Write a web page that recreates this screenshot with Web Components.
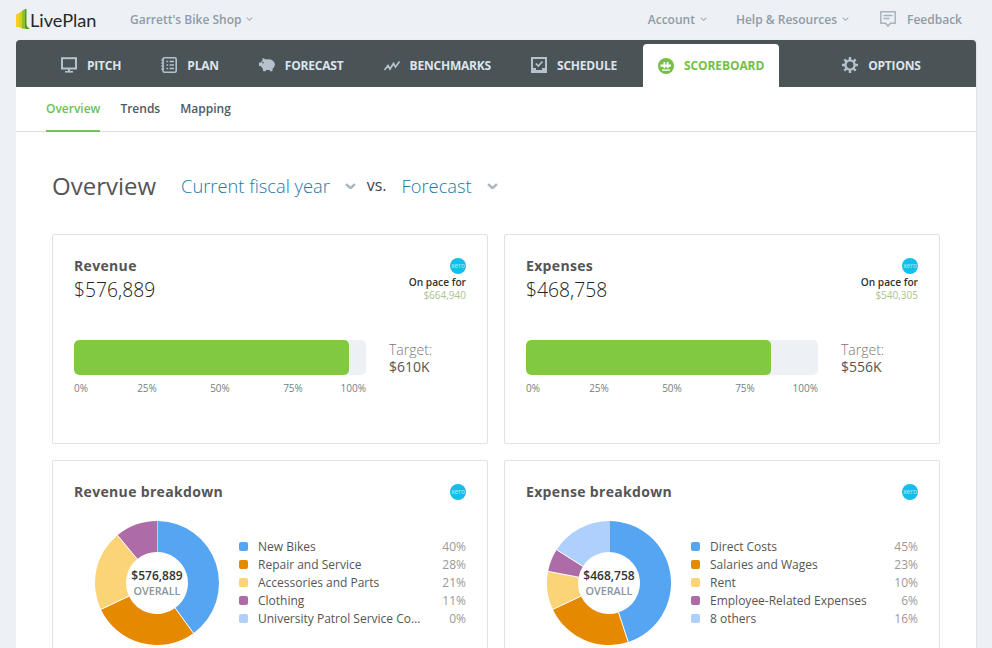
<!DOCTYPE html>
<html lang="en"><head><meta charset="utf-8"><title>LivePlan</title>
<style>
html,body{margin:0;padding:0;height:648px;overflow:hidden;background:#edf0f5;font-family:"Open Sans","Liberation Sans",sans-serif;}
</style></head><body>
<lp-app>
  <lp-topbar slot="top"></lp-topbar>
  <lp-nav slot="nav">
    <lp-nav-item icon="pitch" style="margin-left:45px">PITCH</lp-nav-item>
    <lp-nav-item icon="plan" style="margin-left:40px">PLAN</lp-nav-item>
    <lp-nav-item icon="forecast" style="margin-left:40px">FORECAST</lp-nav-item>
    <lp-nav-item icon="benchmarks" style="margin-left:40px">BENCHMARKS</lp-nav-item>
    <lp-nav-item icon="schedule" style="margin-left:40px">SCHEDULE</lp-nav-item>
    <lp-nav-item icon="scoreboard" active style="margin-left:26px">SCOREBOARD</lp-nav-item>
    <lp-nav-item icon="options" style="margin-left:63px">OPTIONS</lp-nav-item>
  </lp-nav>
  <lp-subnav slot="sub"></lp-subnav>
  <lp-overview-head slot="main"></lp-overview-head>
  <lp-grid slot="main">
    <lp-metric-card title="Revenue" amount="$576,889" pace="$664,940" pct="94.2" target="$610K"></lp-metric-card>
    <lp-metric-card title="Expenses" amount="$468,758" pace="$540,305" pct="83.9" target="$556K"></lp-metric-card>
    <lp-breakdown-card title="Revenue breakdown" amount="$576,889" data='[["New Bikes",40],["Repair and Service",28],["Accessories and Parts",21],["Clothing",11],["University Patrol Service Company",0]]'></lp-breakdown-card>
    <lp-breakdown-card title="Expense breakdown" amount="$468,758" data='[["Direct Costs",45],["Salaries and Wages",23],["Rent",10],["Employee-Related Expenses",6],["8 others",16]]'></lp-breakdown-card>
  </lp-grid>
</lp-app>
<script>
const chevron=(c,w=8,sw=1.3)=>`<svg width="${w}" height="${w*.6}" viewBox="0 0 8 4.8" fill="none" stroke="${c}" stroke-width="${sw}"><path d="M.8.8 4 3.8 7.2.8"/></svg>`;
const ICONS={
 pitch:`<rect x="1" y="1.2" width="14" height="10.3" fill="none" stroke="currentColor" stroke-width="2"/><rect x="7" y="12" width="2" height="2.5" fill="currentColor"/><rect x="4" y="14" width="8" height="1.6" fill="currentColor"/>`,
 plan:`<rect x="2" y=".8" width="13.2" height="14.4" rx="1.5" fill="none" stroke="currentColor" stroke-width="1.6"/><path d="M0 3h3.2M0 6h3.2M0 9h3.2M0 12h3.2" stroke="currentColor" stroke-width="1.2"/><path d="M5.5 4.5h1.6M8.5 4.5h4.5M5.5 8h1.6M8.5 8h4.5M5.5 11.5h1.6M8.5 11.5h4.5" stroke="currentColor" stroke-width="1.6"/>`,
 forecast:`<path fill="currentColor" d="M3.6 1.2c1.3 0 2.2.7 2.8 1.3 1-.3 2.3-.4 3.5-.2 3.4.4 6 2.5 6 5.2 0 1.7-1 3-2.2 4l-.4 2.7h-2.4l-.3-1.3c-1.2.2-2.5.2-3.6 0l-.3 1.3H4.2l-.5-2.8C2.8 10.6 2.2 9.8 1.8 9H0V5.600h1.700c.4-.7.9-1.300 1.600-1.700z"/><circle cx="4" cy="5.600" r=".8" fill="#4a5356"/>`,
 benchmarks:`<path fill="none" stroke="currentColor" stroke-width="1.700" d="M.5 13 4 8.500l2 3.500 3.500-5.500 2 3.500L15.500 4.500"/>`,
 schedule:`<path fill="currentColor" fill-rule="evenodd" d="M0 0h16v16H0zM2 2v9h3v2h6v-2h3V2z"/><path fill="none" stroke="currentColor" stroke-width="1.700" d="M4.800 6.500 7.300 9 11.500 4.500"/>`,
 scoreboard:`<circle cx="8" cy="8" r="8" fill="#74c044"/><path fill="#fff" d="M2.500 6.500h3v-2.500h1.700v2.500h1.600v-2.500h1.700v2.500h2.500v2.200h-2.500v1.500h-1.700V8.700H7.200v1.500H5.500V8.700h-3z"/><rect x="4" y="11.500" width="8" height="1.300" fill="#fff"/>`,
 options:`<circle cx="8" cy="8" r="4.600" fill="none" stroke="currentColor" stroke-width="2.400"/><path stroke="currentColor" stroke-width="2.400" d="M8 0v3M8 13v3M0 8h3M13 8h3M2.300 2.300l2.200 2.200M11.500 11.500l2.200 2.200M13.700 2.300l-2.200 2.200M4.500 11.500l-2.200 2.200"/>`
};
function def(name,css,render){
  customElements.define(name,class extends HTMLElement{
    connectedCallback(){
      if(this.shadowRoot)return;
      const r=this.attachShadow({mode:"open"});
      r.innerHTML=`<style>${css}</style>`+render(this);
    }
  });
}
def("lp-logo",`:host{display:flex;align-items:center;width:100px}
 svg{flex:none;display:block}
 span{font:400 18.2px/20px Lato,"Open Sans",sans-serif;color:#26282a;position:relative;top:1px}`,
 ()=>`<svg width="14" height="20" viewBox="0 0 14 20"><path d="M0 5.500 3 4v14l-3 .2z" fill="#f2d21f"/><path d="M3 4l3-2v17.500l-3-1.500z" fill="#d6d020"/><path d="M6 2l3-2v19l1 1-4-.5z" fill="#8cc02a"/><path d="M9 0h1.500v15c0 2 1.500 4 3.500 5h-4l-1-1z" fill="#4f9a24"/></svg><span>LivePlan</span>`);
def("lp-menu-link",`:host{display:inline-flex;align-items:center;font-weight:600;font-size:12px;color:#8f9ba6}
 svg{margin-left:5px}`,()=>`<slot></slot>${chevron("#a2adb7",7,1.2)}`);
def("lp-topbar",`:host{display:flex;align-items:center;height:40px;padding:0 30px 2px 16px;box-sizing:border-box;font-size:12px;font-weight:600;color:#8f9ba6}
 lp-menu-link:first-of-type{margin-left:14px}
 .sp{flex:1}
 .fb{display:flex;align-items:center;margin-left:31px}
 .fb svg{margin-right:11px}`,
 ()=>`<lp-logo></lp-logo><lp-menu-link>Garrett's Bike Shop</lp-menu-link><div class="sp"></div><lp-menu-link>Account</lp-menu-link><lp-menu-link style="margin-left:29px">Help &amp; Resources</lp-menu-link><div class="fb"><svg width="16" height="16" viewBox="0 0 16 16" fill="none" stroke="#a8b3bd" stroke-width="1.500"><path d="M.8.8h14.400v11.400h-4.700L8 15l-2.500-2.800H.8z"/><path d="M3.500 4.500h9M3.500 7.500h6" stroke-width="1.300"/></svg>Feedback</div>`);
def("lp-nav",`:host{display:flex;height:47px;background:#4a5356;border-radius:4px 4px 0 0}`,()=>`<slot></slot>`);
def("lp-nav-item",`:host{display:flex;align-items:center;box-sizing:border-box;height:47px;padding-top:3px;font-weight:700;font-size:12px;color:#dde4ee;letter-spacing:-.2px}
 svg{flex:none;margin-right:10px;color:#b6c1cd;display:block}
 :host([active]){background:#fff;color:#74c044;height:43px;margin-top:4px;padding:0 15px;border-radius:4px 4px 0 0;letter-spacing:-.1px}`,
 h=>`<svg width="16" height="16" viewBox="0 0 16 16">${ICONS[h.getAttribute("icon")]}</svg><span><slot></slot></span>`);
def("lp-subnav",`:host{display:flex;height:45px;box-sizing:border-box;padding-left:30px;background:#fff;border-bottom:1px solid #dcdfe3;font-size:12px;font-weight:600;color:#4d5a63}
 a{display:flex;align-items:center;height:45px;margin-right:20px;box-sizing:border-box;padding-bottom:2px}
 a.on{color:#6cbf58;box-shadow:inset 0 -2px 0 #74c25c}`,
 ()=>`<a class="on">Overview</a><a>Trends</a><a>Mapping</a>`);
def("lp-overview-head",`:host{display:flex;align-items:center;height:32px;margin:0 0 32px;color:#333}
 h1{font-size:24px;font-weight:400;color:#555;margin:0 25px 0 0;line-height:32px}
 .s{font-size:18.3px;font-weight:300;color:#2379ac;display:flex;align-items:center;padding-bottom:2px}
 .s svg{margin:2px 0 0 15px}
 .v{font-size:16px;margin:0 15px 0 11px;color:#444;padding-bottom:2px}`,
 ()=>`<h1>Overview</h1><div class="s">Current fiscal year${chevron("#aab5c0",11,1.8)}</div><div class="v">vs.</div><div class="s">Forecast${chevron("#aab5c0",11,1.8)}</div>`);
def("lp-grid",`:host{display:grid;grid-template-columns:436px 436px;grid-auto-rows:210px;gap:16px}`,()=>`<slot></slot>`);
def("lp-xero",`:host{display:flex;align-items:center;justify-content:center;width:16px;height:16px;border-radius:50%;background:#13bfe8;color:#b5ecfa;font:400 6.5px/16px "Open Sans",sans-serif;flex:none}`,()=>`xero`);
const cardCss=`:host{display:block;box-sizing:border-box;background:#fff;border:1px solid #dfe2e7;border-radius:2px;padding:23px 21px 0;height:210px}
 h2{margin:0;font-size:14px;line-height:16px;font-weight:700;color:#555;letter-spacing:.33px}`;
def("lp-metric-card",cardCss+`
 .top{display:flex;justify-content:space-between;height:82px}
 .amt{font-size:19.3px;font-weight:300;line-height:24px;color:#222;margin-top:4px}
 .pace{display:flex;flex-direction:column;align-items:flex-end;font-size:10.2px;line-height:13px;font-weight:600;color:#333}
 .pace lp-xero{margin-bottom:2px}
 .pace i{font-style:normal;font-weight:400;font-size:10px;color:#a9c48c}
 .row{display:flex}
 .bw{width:292px}
 .bar{height:35px;background:#edf0f5;border-radius:5px;overflow:hidden}
 .fill{height:100%;background:#82c942;border-radius:5px}
 .ticks{display:grid;grid-template-columns:36.500px 73px 73px 73px 36.500px;font-size:10px;line-height:14px;color:#6f7f88;margin-top:6px;text-align:center}
 .ticks span:first-child{text-align:left}.ticks span:last-child{text-align:right}
 .t{margin-left:23px;font-size:14px;font-weight:300;line-height:17px;color:#777;padding-top:1px}
 .t b{display:block;font-weight:400;color:#555}`,
 h=>{const a=n=>h.getAttribute(n);return `<div class="top"><div><h2>${a("title")}</h2><div class="amt">${a("amount")}</div></div><div class="pace"><lp-xero></lp-xero><span>On pace for</span><i>${a("pace")}</i></div></div>
 <div class="row"><div class="bw"><div class="bar"><div class="fill" style="width:${a("pct")}%"></div></div><div class="ticks"><span>0%</span><span>25%</span><span>50%</span><span>75%</span><span>100%</span></div></div><div class="t">Target:<b>${a("target")}</b></div></div>`});
const COLORS=["#55a5f2","#e58900","#fbd477","#ad6ca8","#afd0fc"];
function donutPaths(vals){
  let acc=0,out="";const R=62,r=31,c=62;
  const pt=(rad,a)=>[(c+rad*Math.sin(a)).toFixed(2),(c-rad*Math.cos(a)).toFixed(2)];
  vals.forEach((v,i)=>{ if(!v)return;
    const a0=acc/100*2*Math.PI,a1=(acc+v)/100*2*Math.PI;acc+=v;
    const l=v>50?1:0,[x0,y0]=pt(R,a0),[x1,y1]=pt(R,a1),[x2,y2]=pt(r,a1),[x3,y3]=pt(r,a0);
    out+=`<path fill="${COLORS[i]}" d="M${x0} ${y0}A${R} ${R} 0 ${l} 1 ${x1} ${y1}L${x2} ${y2}A${r} ${r} 0 ${l} 0 ${x3} ${y3}Z"/><path stroke="#fff" stroke-width="1" d="M${x0} ${y0}L${x3} ${y3}"/>`;
  });return out;
}
def("lp-donut",`:host{display:grid;width:124px;height:124px;flex:none;place-items:center}
 svg,.c{grid-area:1/1}
 svg{display:block}
 .c{text-align:center}
 b{display:block;font-size:12px;line-height:15px;font-weight:600;color:#333}
 span{display:block;font-size:10.8px;line-height:15px;font-weight:600;color:#8a959e}`,
 h=>`<svg width="124" height="124" viewBox="0 0 124 124">${donutPaths(JSON.parse(h.getAttribute("vals")))}</svg><div class="c"><b>${h.getAttribute("amount")}</b><span>OVERALL</span></div>`);
def("lp-legend-row",`:host{display:flex;align-items:center;height:18px;font-size:12px;color:#555}
 i{width:9px;height:9px;border-radius:2px;margin-right:10px;flex:none}
 .n{width:164px;white-space:nowrap;overflow:hidden;text-overflow:ellipsis;flex:none}
 .p{flex:1;text-align:right;color:#999}`,
 h=>`<i style="background:${h.getAttribute("color")}"></i><span class="n"><slot></slot></span><span class="p">${h.getAttribute("pct")}</span>`);
def("lp-breakdown-card",cardCss+`
 .top{display:flex;justify-content:space-between;align-items:center;height:16px}
 .body{display:flex;align-items:center;margin-top:21px;padding-left:21px}
 .leg{flex:1;margin:-2px 0 0 20px}`,
 h=>{const d=JSON.parse(h.getAttribute("data"));return `<div class="top"><h2>${h.getAttribute("title")}</h2><lp-xero></lp-xero></div><div class="body"><lp-donut amount="${h.getAttribute("amount")}" vals="${JSON.stringify(d.map(x=>x[1]))}"></lp-donut><div class="leg">${d.map((x,i)=>`<lp-legend-row color="${COLORS[i]}" pct="${x[1]}%">${x[0]}</lp-legend-row>`).join("")}</div></div>`});
def("lp-app",`:host{display:block}
 .box{margin:0 16px;border-radius:4px 4px 0 0;background:#fff;box-shadow:1px 0 2px rgba(0,0,0,.06)}
 main{padding:38px 36px 0}`,
 ()=>`<slot name="top"></slot><div class="box"><slot name="nav"></slot><slot name="sub"></slot><main><slot name="main"></slot></main></div>`);
</script>
</body></html>
